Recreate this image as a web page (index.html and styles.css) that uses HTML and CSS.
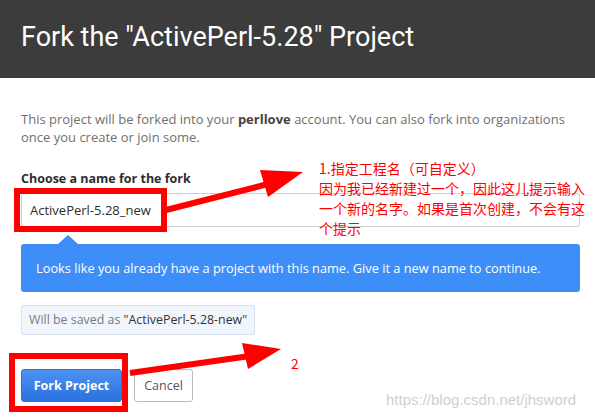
FILE: index.html
```html
<!DOCTYPE html>
<html lang="en">

<head>
    <meta charset="UTF-8">
    <title>Fork project</title>
    <link rel="stylesheet" href="styles.css">
</head>

<body>
    <div class="header">
        <h1>Fork the "ActivePerl-5.28" Project</h1>
    </div>

    <div class="content">
        <p class="intro">This project will be forked into your <b>perllove</b> account. You can also fork into organizations<br>
            once you create or join some.</p>

        <label for="forkName">Choose a name for the fork</label>
        <input type="text" id="forkName" class="name-input" value="ActivePerl-5.28_new">

        <div class="alert">Looks like you already have a project with this name. Give it a new name to continue.</div>

        <div class="saved-as">Will be saved as <span class="saved-name">"ActivePerl-5.28-new"</span></div>

        <div class="actions">
            <button class="btn-fork">Fork Project</button>
            <button class="btn-cancel">Cancel</button>
        </div>
    </div>

    <!-- annotations on top of the screenshot -->
    <div class="mark mark-input"></div>
    <div class="mark mark-button"></div>

    <svg class="arrows" width="595" height="419" viewBox="0 0 595 419">
        <line x1="166" y1="210" x2="268" y2="184" stroke="#ff0000" stroke-width="6" />
        <polygon points="303,172 260,170 268,197" fill="#ff0000" />
        <line x1="130" y1="373" x2="250" y2="356" stroke="#ff0000" stroke-width="6" />
        <polygon points="281,349 242,343 248,369" fill="#ff0000" />
    </svg>

    <div class="note note-1">1.指定工程名（可自定义）<br>因为我已经新建过一个，因此这儿提示输入<br>一个新的名字。如果是首次创建，不会有这<br>个提示</div>
    <div class="note note-2">2</div>

    <div class="watermark">https://blog.csdn.net/jhsword</div>
</body>

</html>
```

FILE: styles.css
```css
body {
    margin: 0;
    font-family: "Open Sans", "Noto Sans", sans-serif;
    background-color: #fff;
    width: 595px;
    height: 419px;
    overflow: hidden;
    position: relative;
}

.header {
    background-color: #3c3c3c;
    height: 78px;
    padding: 0 21px;
    display: flex;
    align-items: center;
}

h1 {
    margin: 0 0 4px;
    font-family: Roboto, sans-serif;
    font-weight: 400;
    font-size: 27px;
    color: #fff;
}

.content {
    padding: 32px 15px 0 21px;
}

.intro {
    margin: 0;
    font-size: 13px;
    line-height: 18px;
    color: #707070;
    white-space: nowrap;
}

.intro b {
    color: #444;
}

label {
    display: block;
    margin-top: 24px;
    font-size: 12.5px;
    font-weight: bold;
    line-height: 18px;
    color: #2e2e2e;
}

.name-input {
    display: block;
    box-sizing: border-box;
    width: 100%;
    height: 34px;
    margin-top: 5px;
    padding: 0 8px;
    border: 1px solid #cfcfcf;
    border-radius: 3px;
    font-family: "Open Sans", sans-serif;
    font-size: 13px;
    color: #2e2e2e;
}

.alert {
    position: relative;
    margin-top: 17px;
    height: 48px;
    padding: 0 15px;
    display: flex;
    align-items: center;
    background-color: #3d8ef8;
    border-radius: 3px;
    color: #fff;
    font-size: 12.8px;
    white-space: nowrap;
}

.alert::before {
    content: "";
    position: absolute;
    left: 37px;
    top: -9px;
    border-left: 10px solid transparent;
    border-right: 10px solid transparent;
    border-bottom: 9px solid #3d8ef8;
}

.saved-as {
    display: inline-block;
    margin-top: 13px;
    height: 30px;
    line-height: 28px;
    padding: 0 7px;
    box-sizing: border-box;
    background-color: #f1f6fd;
    border: 1px solid #d7e1ee;
    border-radius: 2px;
    font-size: 12.4px;
    color: #7a7a7a;
}

.saved-name {
    color: #333;
}

.actions {
    display: flex;
    gap: 12px;
    margin-top: 34px;
}

.actions button {
    height: 33px;
    border-radius: 3px;
    font-family: "Open Sans", sans-serif;
    font-size: 12.5px;
    cursor: pointer;
}

.btn-fork {
    width: 101px;
    border: 1px solid #2f74dc;
    background: linear-gradient(#4d92f2, #2a71df);
    color: #fff;
    font-weight: bold;
}

.btn-cancel {
    width: 59px;
    border: 1px solid #bcbcbc;
    background-color: #fff;
    color: #555;
}

.mark {
    position: absolute;
    border: 6px solid #ff0000;
    box-sizing: border-box;
}

.mark-input {
    left: 14px;
    top: 188px;
    width: 153px;
    height: 44px;
}

.mark-button {
    left: 9px;
    top: 353px;
    width: 119px;
    height: 59px;
}

.arrows {
    position: absolute;
    left: 0;
    top: 0;
}

.note {
    position: absolute;
    color: #ff0000;
    font-family: "Noto Sans CJK SC", sans-serif;
    font-size: 14px;
    line-height: 20px;
}

.note-1 {
    left: 319px;
    top: 158px;
}

.note-2 {
    left: 291px;
    top: 353px;
    font-size: 14px;
}

.watermark {
    position: absolute;
    left: 386px;
    top: 391px;
    font-family: "Liberation Sans", Arial, sans-serif;
    font-size: 15px;
    color: #cfcfcf;
}
```
